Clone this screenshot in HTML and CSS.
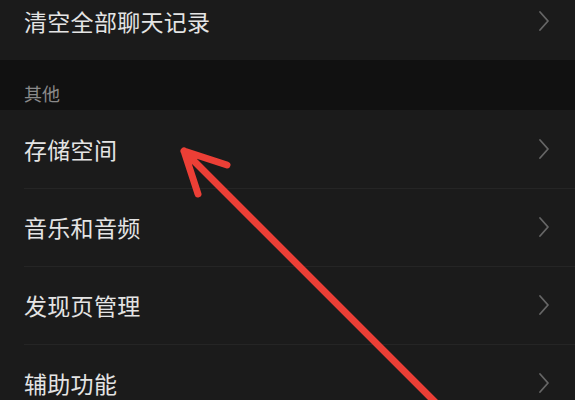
FILE: index.html
```html
<!DOCTYPE html>
<html lang="zh">
<head>
<meta charset="utf-8">
<link rel="stylesheet" href="styles.css">
</head>
<body>
<div class="page">
  <div class="group first">
    <div class="row"><span class="label">清空全部聊天记录</span><svg class="chev" viewBox="0 0 12 22"><path d="M2 2 L10 11 L2 20"/></svg></div>
  </div>
  <div class="section">其他</div>
  <div class="group">
    <div class="row"><span class="label">存储空间</span><svg class="chev" viewBox="0 0 12 22"><path d="M2 2 L10 11 L2 20"/></svg></div>
    <div class="row"><span class="label">音乐和音频</span><svg class="chev" viewBox="0 0 12 22"><path d="M2 2 L10 11 L2 20"/></svg></div>
    <div class="row"><span class="label">发现页管理</span><svg class="chev" viewBox="0 0 12 22"><path d="M2 2 L10 11 L2 20"/></svg></div>
    <div class="row"><span class="label">辅助功能</span><svg class="chev" viewBox="0 0 12 22"><path d="M2 2 L10 11 L2 20"/></svg></div>
  </div>
  <svg class="arrow" viewBox="0 0 575 400" width="575" height="400">
    <path d="M437 404 L184 151 M184 151 L227 165 M184 151 L198 194"/>
  </svg>
</div>
</body>
</html>
```
FILE: styles.css
```css
html, body {
  margin: 0;
  padding: 0;
  background: #1b1b1b;
  overflow: hidden;
}
.page {
  position: relative;
  width: 575px;
  height: 400px;
  overflow: hidden;
  font-family: "Noto Sans CJK SC", "Noto Sans", sans-serif;
}
.group {
  background: #1b1b1b;
}
.group.first {
  margin-top: -18px;
}
.row {
  height: 78px;
  display: flex;
  align-items: center;
  justify-content: space-between;
  padding: 0 25px 0 24px;
  position: relative;
}
.group .row + .row::before {
  content: "";
  position: absolute;
  left: 24px;
  right: 0;
  top: 0;
  height: 1px;
  background: #252525;
}
.label {
  color: #e4e4e4;
  font-size: 23px;
  line-height: 1;
  letter-spacing: 0.3px;
}
.chev {
  width: 12px;
  height: 22px;
  fill: none;
  stroke: #666;
  stroke-width: 1.8;
  stroke-linecap: round;
  stroke-linejoin: round;
}
.section {
  background: #111;
  height: 50px;
  box-sizing: border-box;
  padding: 23px 0 0 24px;
  color: #8a8a8a;
  font-size: 18px;
  line-height: 20px;
}
.arrow {
  position: absolute;
  left: 0;
  top: 0;
  fill: none;
  stroke: #ec3f36;
  stroke-width: 7;
  stroke-linecap: round;
  stroke-linejoin: round;
}
```
